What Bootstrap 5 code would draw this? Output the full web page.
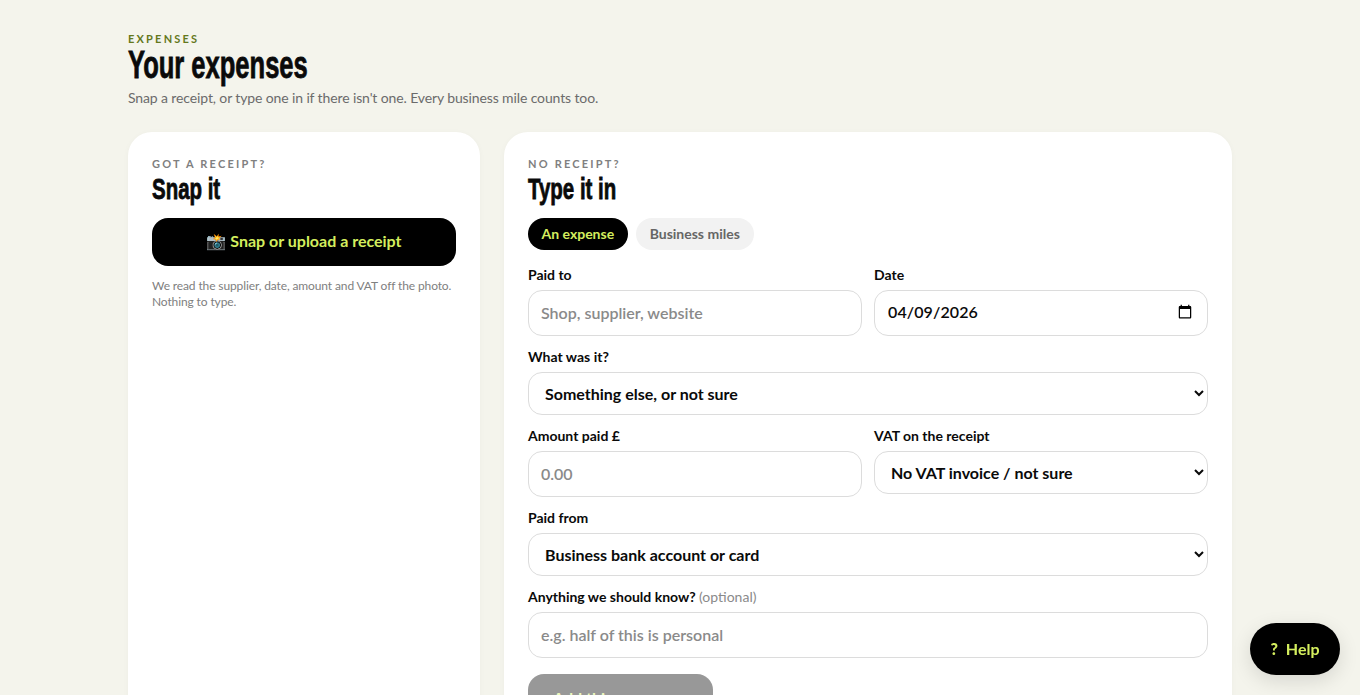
<!DOCTYPE html>
<html lang="en-GB">
<head>
<meta charset="utf-8">
<title>Your expenses</title>
<link href="https://cdn.jsdelivr.net/npm/bootstrap@5.3.0/dist/css/bootstrap.min.css" rel="stylesheet">
<style>
body{background:#f4f4ec;font-family:"Lato","Liberation Sans",sans-serif;color:#0a0a0a;}
.page-wrap{width:1104px;margin:0 auto;padding-top:32px;padding-bottom:40px;}
.eyebrow{font-size:11px;font-weight:700;letter-spacing:2.2px;color:#64781c;line-height:14px;}
.display-head,.panel-head{font-family:"Liberation Sans",sans-serif;font-weight:700;color:#0a0a0a;margin:0;transform-origin:left center;-webkit-text-stroke:.8px #0a0a0a;}
.display-head{font-size:38px;line-height:39px;transform:scaleX(.672);}
.panel-head{font-size:29px;line-height:34px;transform:scaleX(.705);}
.intro{font-size:14px;line-height:20px;color:#6b6b6b;margin:3px 0 24px;letter-spacing:-.12px;}
.layout-grid{display:grid;grid-template-columns:352px 728px;gap:24px;}
.panel{background:#fff;border-radius:24px;padding:24px;box-shadow:0 1px 6px rgba(0,0,0,.03);}
.panel-left{min-height:700px;}
.kicker{font-size:11px;font-weight:700;letter-spacing:2.2px;color:#808080;line-height:16px;}
.snap-btn{display:block;width:100%;height:48px;border-radius:16px;background:#000;color:#d4ee5e;font-weight:700;font-size:16px;border:0;margin-top:12px;padding:0 0 2px;}
.snap-note{font-size:12px;line-height:16px;color:#808080;margin:12px 0 0;letter-spacing:-.12px;}
.tab-pill{height:32px;border-radius:16px;border:0;padding:0 14px 2px;font-size:14px;font-weight:700;background:#f2f2f2;color:#666;}
.tab-pill.is-on{background:#000;color:#d4ee5e;padding:0 13.5px 2px;}
.tab-row{margin-top:12px;margin-bottom:16px;}
.field-label{display:block;font-size:14px;font-weight:700;line-height:18px;margin-bottom:6px;color:#0a0a0a;}
.field-label span{font-weight:400;color:#8a8a8a;}
.field-input{border:1px solid #dcdcdc;border-radius:14px;height:46px;font-size:16px;padding:0 12px 2px;color:#0a0a0a;font-family:inherit;font-weight:600;}
.field-input::placeholder{color:#8a8a8a;font-weight:600;}
.field-date{padding-left:13px;letter-spacing:.1px;}
.field-select{appearance:auto;-webkit-appearance:auto;height:43px;background-color:#fff;font-weight:700;padding:0 12px;}
.form-stack{display:grid;grid-template-columns:1fr 1fr;column-gap:12px;row-gap:12px;}
.wide{grid-column:1 / span 2;}
.add-btn{display:block;width:185px;height:48px;border-radius:16px;border:0;background:#000;color:#d4ee5e;font-weight:700;font-size:16px;margin-top:16px;opacity:.4;text-align:left;padding:0 25px;}
.help-btn{position:fixed;right:20px;bottom:20px;width:90px;height:52px;border-radius:26px;background:#000;color:#d4ee5e;border:0;font-weight:700;font-size:16px;box-shadow:0 6px 20px rgba(0,0,0,.12);}
.help-btn b{margin-right:4px;}
</style>
</head>
<body>
<div class="page-wrap">
  <div class="eyebrow">EXPENSES</div>
  <h1 class="display-head">Your expenses</h1>
  <p class="intro">Snap a receipt, or type one in if there isn't one. Every business mile counts too.</p>
  <div class="layout-grid">
    <section class="panel panel-left">
      <div class="kicker">GOT A RECEIPT?</div>
      <h2 class="panel-head">Snap it</h2>
      <button class="snap-btn" type="button">📸 Snap or upload a receipt</button>
      <p class="snap-note">We read the supplier, date, amount and VAT off the photo. Nothing to type.</p>
    </section>
    <section class="panel">
      <div class="kicker">NO RECEIPT?</div>
      <h2 class="panel-head">Type it in</h2>
      <div class="d-flex gap-2 tab-row">
        <button class="tab-pill is-on" type="button">An expense</button>
        <button class="tab-pill" type="button">Business miles</button>
      </div>
      <form class="form-stack">
        <div><label class="field-label">Paid to</label><input class="form-control field-input" placeholder="Shop, supplier, website"></div>
        <div><label class="field-label">Date</label><input class="form-control field-input field-date" type="date" value="2026-04-09"></div>
        <div class="wide"><label class="field-label">What was it?</label>
          <select class="form-control field-input field-select"><option>Something else, or not sure</option></select></div>
        <div><label class="field-label">Amount paid £</label><input class="form-control field-input" placeholder="0.00"></div>
        <div><label class="field-label">VAT on the receipt</label>
          <select class="form-control field-input field-select"><option>No VAT invoice / not sure</option></select></div>
        <div class="wide"><label class="field-label">Paid from</label>
          <select class="form-control field-input field-select"><option>Business bank account or card</option></select></div>
        <div class="wide"><label class="field-label">Anything we should know? <span>(optional)</span></label><input class="form-control field-input" placeholder="e.g. half of this is personal"></div>
      </form>
      <button class="add-btn" type="button" disabled>Add this expense</button>
    </section>
  </div>
</div>
<button class="help-btn" type="button"><b>?</b> Help</button>
<script src="https://cdn.jsdelivr.net/npm/bootstrap@5.3.0/dist/js/bootstrap.bundle.min.js"></script>
</body>
</html>
